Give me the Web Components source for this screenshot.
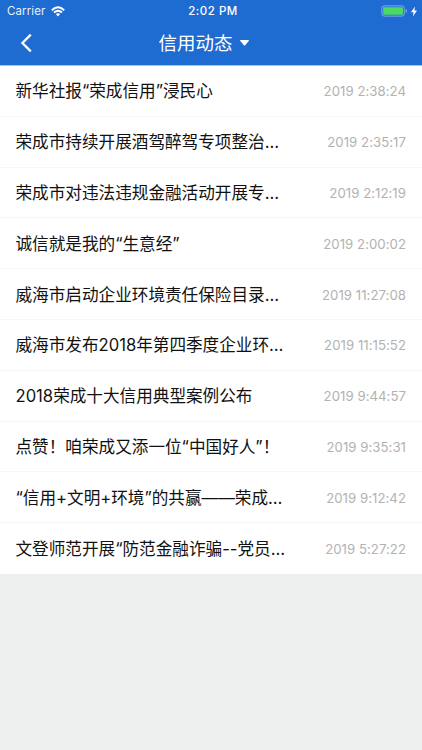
<!DOCTYPE html>
<html lang="zh-CN">
<head>
<meta charset="utf-8">
<title>信用动态</title>
<style>
    body {
        margin: 0;
        background: #eeefef;
        font-family: Inter, "Noto Sans CJK SC", sans-serif;
    }
</style>
</head>
<body>
<news-page>
    <status-bar slot="top" carrier="Carrier" time="2:02 PM"></status-bar>
    <nav-bar slot="top">信用动态</nav-bar>
    <news-item time="2019 2:38:24">新华社报“荣成信用”浸民心</news-item>
    <news-item time="2019 2:35:17">荣成市持续开展酒驾醉驾专项整治…</news-item>
    <news-item time="2019 2:12:19">荣成市对违法违规金融活动开展专…</news-item>
    <news-item time="2019 2:00:02">诚信就是我的“生意经”</news-item>
    <news-item time="2019 11:27:08">威海市启动企业环境责任保险目录…</news-item>
    <news-item time="2019 11:15:52">威海市发布2018年第四季度企业环…</news-item>
    <news-item time="2019 9:44:57">2018荣成十大信用典型案例公布</news-item>
    <news-item time="2019 9:35:31">点赞！咱荣成又添一位“中国好人”！</news-item>
    <news-item time="2019 9:12:42">“信用+文明+环境”的共赢——荣成…</news-item>
    <news-item time="2019 5:27:22">文登师范开展“防范金融诈骗--党员…</news-item>
</news-page>

<script>
class NewsPage extends HTMLElement {
    constructor() {
        super();
        this.attachShadow({ mode: "open" });
        this.shadowRoot.innerHTML = `
            <style>
                :host {
                    display: flex;
                    flex-direction: column;
                    height: 750px;
                    overflow: hidden;
                }

                header {
                    box-sizing: border-box;
                    height: 66px;
                    background: #1e6bd1;
                    border-bottom: 1px solid #a5c8f2;
                    color: white;
                }

                main {
                    background: white;
                }
            </style>
            <header><slot name="top"></slot></header>
            <main><slot></slot></main>
        `;
    }
}

class StatusBar extends HTMLElement {
    constructor() {
        super();
        this.attachShadow({ mode: "open" });
        this.shadowRoot.innerHTML = `
            <style>
                :host {
                    display: grid;
                    grid-template-columns: 1fr auto 1fr;
                    align-items: center;
                    height: 22px;
                    padding: 0 5px 0 7px;
                    font-size: 11.5px;
                    line-height: 22px;
                }

                .left, .right {
                    display: flex;
                    align-items: center;
                }

                .left {
                    gap: 6px;
                }

                .carrier {
                    letter-spacing: 0.1px;
                    opacity: 0.9;
                }

                .right {
                    justify-content: flex-end;
                    gap: 3px;
                }

                .time {
                    margin-left: 2px;
                    font-weight: 500;
                    font-size: 11.5px;
                    letter-spacing: 0.5px;
                }

                svg {
                    display: block;
                }
            </style>
            <div class="left">
                <span class="carrier"></span>
                <svg width="14" height="11" viewBox="0 0 14 11" fill="none" stroke="white" stroke-width="1.9">
                    <path d="M0.8 4.2 Q7 -1.6 13.2 4.2"/>
                    <path d="M3 6.5 Q7 2.8 11 6.5"/>
                    <path d="M4.8 8.1 Q7 6.2 9.2 8.1 L7 10.4 Z" fill="white" stroke="none"/>
                </svg>
            </div>
            <span class="time"></span>
            <div class="right">
                <svg width="27" height="12" viewBox="0 0 27 12">
                    <rect x="0.9" y="0.9" width="22.4" height="10.2" rx="2.4" fill="none" stroke="#82aee8" stroke-width="1"/>
                    <rect x="2.2" y="2.2" width="19.8" height="7.6" rx="1.2" fill="#4cd964"/>
                    <path d="M24.7 4 Q26 4.5 26 6 T24.7 8 Z" fill="#82aee8"/>
                </svg>
                <svg width="6" height="11" viewBox="0 0 6 11">
                    <path d="M3.9 0.4 L0 6.2 H2.6 L1.9 10.6 L6 4.6 H3.4 Z" fill="white"/>
                </svg>
            </div>
        `;
    }

    connectedCallback() {
        this.shadowRoot.querySelector(".carrier").textContent = this.getAttribute("carrier");
        this.shadowRoot.querySelector(".time").textContent = this.getAttribute("time");
    }
}

class NavBar extends HTMLElement {
    constructor() {
        super();
        this.attachShadow({ mode: "open" });
        this.shadowRoot.innerHTML = `
            <style>
                :host {
                    display: grid;
                    grid-template-columns: 60px 1fr 60px;
                    align-items: center;
                    height: 42px;
                }

                .back {
                    margin-left: 20px;
                }

                .title {
                    display: flex;
                    align-items: center;
                    justify-content: center;
                    gap: 7px;
                    padding-right: 15px;
                    font-size: 18.5px;
                    font-weight: 400;
                    line-height: 28px;
                }

                svg {
                    display: block;
                }
            </style>
            <svg class="back" width="13" height="20" viewBox="0 0 13 20">
                <path d="M10.8 1.6 L2.4 10 L10.8 18.4" fill="none" stroke="white" stroke-width="2.3"/>
            </svg>
            <div class="title">
                <slot></slot>
                <svg width="9" height="6" viewBox="0 0 9 6">
                    <path d="M0.5 0 H8.5 Q9.3 0.3 8.7 1 L5.2 5.2 Q4.5 6 3.8 5.2 L0.3 1 Q-0.3 0.3 0.5 0 Z" fill="white"/>
                </svg>
            </div>
        `;
    }
}

class NewsItem extends HTMLElement {
    constructor() {
        super();
        this.attachShadow({ mode: "open" });
        this.shadowRoot.innerHTML = `
            <style>
                :host {
                    display: flex;
                    align-items: center;
                    justify-content: space-between;
                    box-sizing: border-box;
                    height: 50.8px;
                    padding: 1px 16px 0 15.5px;
                    border-bottom: 1px solid #f6f6f6;
                    white-space: nowrap;
                }

                :host(:last-of-type) {
                    border-bottom-color: transparent;
                }

                .title {
                    color: #111;
                    font-size: 16.62px;
                    line-height: 24px;
                }

                time {
                    color: #b2b2b2;
                    font-size: 13.2px;
                    line-height: 20px;
                    letter-spacing: 0.04px;
                }
            </style>
            <span class="title"><slot></slot></span>
            <time></time>
        `;
    }

    connectedCallback() {
        this.shadowRoot.querySelector("time").textContent = this.getAttribute("time");
    }
}

customElements.define("news-page", NewsPage);
customElements.define("status-bar", StatusBar);
customElements.define("nav-bar", NavBar);
customElements.define("news-item", NewsItem);
</script>
</body>
</html>
